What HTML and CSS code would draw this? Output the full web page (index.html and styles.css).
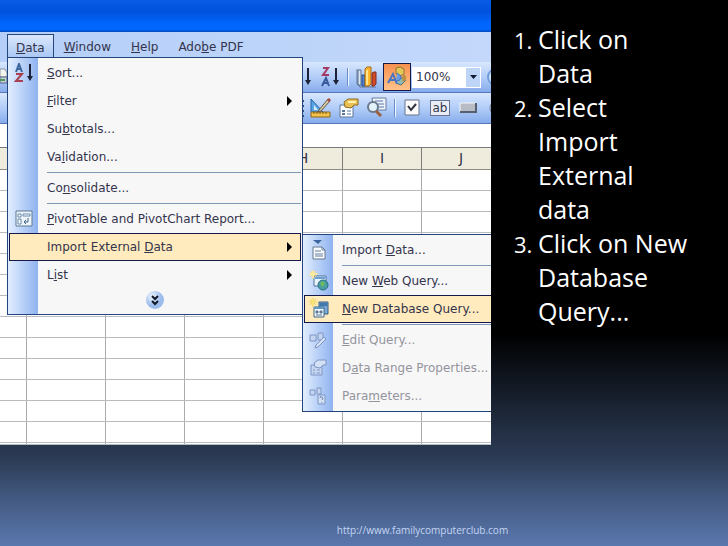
FILE: index.html
```
<!DOCTYPE html>
<html lang="en">
<head>
    <meta charset="UTF-8">
    <meta name="viewport" content="width=device-width, initial-scale=1.0">
    <title>Import External Data</title>
    <link rel="stylesheet" href="styles.css">
</head>
<body>
    <div class="slide">
        <div class="excel">
            <div class="titlebar"></div>

            <nav class="menubar">
                <button class="menu-tab open"><u>D</u>ata</button>
                <button class="menu-tab"><u>W</u>indow</button>
                <button class="menu-tab"><u>H</u>elp</button>
                <button class="menu-tab">Ado<u>b</u>e PDF</button>
            </nav>

            <!-- Standard toolbar -->
            <div class="toolbar">
                <svg class="edge-tool" width="8" height="22" viewBox="0 0 8 22">
                    <path d="M0 3h5l2 4v4H0z" fill="#f4f4ee" stroke="#8c92a0"/>
                    <path d="M0 11h7v6H0z" fill="#c8ccd8" stroke="#596888"/>
                    <path d="M0 14h5" stroke="#4f9a5c" stroke-width="2"/>
                </svg>
                <div class="tools">
                    <svg width="9" height="22" viewBox="0 0 9 22">
                        <path d="M4 2v15" stroke="#1c2238" stroke-width="2"/>
                        <path d="M1 14h6l-3 5z" fill="#1c2238"/>
                    </svg>
                    <button class="tool" aria-label="Sort descending">
                        <svg width="22" height="22" viewBox="0 0 22 22">
                            <path d="M4 2h5L4 9h6" fill="none" stroke="#a53a64" stroke-width="2"/>
                            <path d="M3 20l4-8 3 8M4 17h5" fill="none" stroke="#385a9c" stroke-width="2"/>
                            <path d="M17 2v15" stroke="#1c2238" stroke-width="2"/>
                            <path d="M14 14h6l-3 5z" fill="#1c2238"/>
                        </svg>
                    </button>
                    <span class="divider"></span>
                    <button class="tool" aria-label="Chart wizard">
                        <svg width="22" height="22" viewBox="0 0 22 22">
                            <path d="M2 3v15l3 3h16" fill="none" stroke="#687590" stroke-width="1"/>
                            <path d="M3 4h3v15H3z" fill="#dfe7ef" stroke="#506a94"/>
                            <path d="M7 9h3v11H7z" fill="#4b84d4" stroke="#29508c"/>
                            <path d="M10 3l2-2h4v17l-2 2h-4z" fill="#ffb52c" stroke="#a76818"/>
                            <path d="M11 4h2v15h-2z" fill="#ffe48a"/>
                            <path d="M17 7l2-1h2v12l-2 2h-2z" fill="#d04c28" stroke="#802c20"/>
                        </svg>
                    </button>
                    <div class="zoom-group">
                        <button class="tool active" aria-label="Drawing">
                            <svg width="22" height="22" viewBox="0 0 22 22">
                                <path d="M10 2l4-1 4 2v5l-4 2-4-2z" fill="#e5c75a" stroke="#92742c"/>
                                <path d="M12 12h6l2 2-5 5-5-2z" fill="#8fbbb8" stroke="#4d7477"/>
                                <path d="M17 8l3 2v4l-4 2z" fill="#bd9040"/>
                                <path d="M2 17L7 8l4 10M4 14h6" fill="none" stroke="#4a74c4" stroke-width="2"/>
                                <path d="M11 7l4 3-1 4-4 1" fill="#6b9de4" stroke="#4a74c4"/>
                            </svg>
                        </button>
                        <div class="zoom-box">
                            <input class="zoom-input" type="text" value="100%" aria-label="Zoom">
                            <button class="zoom-arrow" aria-label="Zoom levels">
                                <svg width="7" height="4" viewBox="0 0 7 4"><path d="M0 0h7L3.500 4z" fill="#101830"/></svg>
                            </button>
                        </div>
                    </div>
                    <svg width="4" height="22" viewBox="0 0 4 22">
                        <circle cx="9" cy="11" r="8" fill="#c9e0fb" stroke="#6f9bd8" stroke-width="2"/>
                    </svg>
                </div>
            </div>

            <!-- Control toolbox -->
            <div class="toolbar">
                <div class="tools">
                    <svg width="2" height="22" viewBox="0 0 2 22">
                        <path d="M0 3h2v2H0zM0 8h2v2H0zM0 13h2v2H0zM0 18h2v2H0z" fill="#34507f"/>
                    </svg>
                    <button class="tool" aria-label="Design mode">
                        <svg width="22" height="22" viewBox="0 0 22 22">
                            <path d="M1 2l12 13H1z" fill="#58a5e4" stroke="#2865a8"/>
                            <path d="M4 8l4 5H4z" fill="#d8ecfa"/>
                            <path d="M1 15h19v5H1z" fill="#f2c249" stroke="#8c661c"/>
                            <path d="M4 15v2M7 15v2M10 15v2M13 15v2M16 15v2" stroke="#73541c"/>
                            <path d="M9 13L18 2l2 2-9 10-3 1z" fill="#d9cba6" stroke="#5e5748"/>
                            <path d="M17 3l2-2 2 2-2 2z" fill="#a84840"/>
                        </svg>
                    </button>
                    <button class="tool" aria-label="Properties">
                        <svg width="22" height="22" viewBox="0 0 22 22">
                            <path d="M2 8h13v12H2z" fill="#fbfcff" stroke="#5e7598"/>
                            <path d="M4 13h3v2H4zM4 16h3v2H4z" fill="#58779f"/>
                            <path d="M9 14h4M9 17h4" stroke="#58779f"/>
                            <path d="M6 5l4-3h10v6h-4l-3 3-6-1z" fill="#e9c152" stroke="#8b6b25"/>
                            <path d="M10 5h8" stroke="#fff0ae" stroke-width="2"/>
                        </svg>
                    </button>
                    <button class="tool" aria-label="View code">
                        <svg width="22" height="22" viewBox="0 0 22 22">
                            <path d="M6 1h14v12H8z" fill="#eff4fb" stroke="#687c9d"/>
                            <path d="M9 4h8M12 7h6M13 10h5" stroke="#5878a8"/>
                            <circle cx="7" cy="10" r="5" fill="#e6f2fa" stroke="#68788c" stroke-width="2"/>
                            <path d="M10 14l5 5" stroke="#9c6240" stroke-width="3"/>
                        </svg>
                    </button>
                    <span class="divider"></span>
                    <div class="controls">
                        <button class="tool" aria-label="Check box">
                            <svg width="20" height="22" viewBox="0 0 20 22">
                                <path d="M3 3h14v15H3z" fill="#fbfbfb" stroke="#66738e"/>
                                <path d="M6 9l3 4 5-6" fill="none" stroke="#30343e" stroke-width="2"/>
                            </svg>
                        </button>
                        <button class="tool text-control" aria-label="Text box">ab</button>
                        <button class="tool" aria-label="Command button">
                            <svg width="20" height="22" viewBox="0 0 20 22">
                                <path d="M2 6h16v9H2z" fill="#b8bcc4"/>
                                <path d="M2 15V6h16" fill="none" stroke="#f5f7fa"/>
                                <path d="M2 15h16V6" fill="none" stroke="#565f70" stroke-width="2"/>
                            </svg>
                        </button>
                    </div>
                    <svg width="7" height="22" viewBox="0 0 7 22">
                        <circle cx="13" cy="11" r="7" fill="#f4f7fb" stroke="#66738e"/>
                    </svg>
                </div>
            </div>

            <div class="formula-bar"></div>

            <div class="columns">
                <span></span><span></span><span></span><span></span>
                <span>H</span><span>I</span><span>J</span>
            </div>
            <div class="cells"></div>

            <!-- Data menu -->
            <div class="menu data-menu">
                <button class="item">
                    <span class="icon">
                        <svg width="20" height="20" viewBox="0 0 20 20">
                            <path d="M2 9l3-8 3 8M3 6h4" fill="none" stroke="#3d679c" stroke-width="2"/>
                            <path d="M2 11h6l-6 7h7" fill="none" stroke="#a84050" stroke-width="2"/>
                            <path d="M16 1v14" stroke="#1c2238" stroke-width="2"/>
                            <path d="M13 13h6l-3 5z" fill="#1c2238"/>
                        </svg>
                    </span>
                    <span class="label"><u>S</u>ort...</span>
                </button>
                <button class="item"><span class="icon"></span><span class="label"><u>F</u>ilter</span><span class="more"></span></button>
                <button class="item"><span class="icon"></span><span class="label">Su<u>b</u>totals...</span></button>
                <button class="item"><span class="icon"></span><span class="label">Va<u>l</u>idation...</span></button>
                <hr class="rule">
                <button class="item"><span class="icon"></span><span class="label">Co<u>n</u>solidate...</span></button>
                <hr class="rule">
                <button class="item">
                    <span class="icon">
                        <svg width="20" height="20" viewBox="0 0 20 20">
                            <path d="M2 2h16v15H2z" fill="#eef5fa" stroke="#5d7894"/>
                            <path d="M4 5h3v3H4zM9 5h7v2H9zM4 10h3v5H4z" fill="#fff" stroke="#668aac"/>
                            <path d="M14 9v4h-4M12 11l-2 2 2 2" fill="none" stroke="#426486"/>
                        </svg>
                    </span>
                    <span class="label"><u>P</u>ivotTable and PivotChart Report...</span>
                </button>
                <button class="item selected"><span class="icon"></span><span class="label">Import External <u>D</u>ata</span><span class="more"></span></button>
                <button class="item"><span class="icon"></span><span class="label">L<u>i</u>st</span><span class="more"></span></button>
                <button class="expand" aria-label="Show all">
                    <svg width="20" height="20" viewBox="0 0 20 20">
                        <defs>
                            <radialGradient id="ball" cx="35%" cy="30%">
                                <stop offset="0" stop-color="#f0f6ff"/>
                                <stop offset="1" stop-color="#9cbcec"/>
                            </radialGradient>
                        </defs>
                        <circle cx="10" cy="10" r="9" fill="url(#ball)"/>
                        <path d="M7 6l3 3 3-3M7 11l3 3 3-3" fill="none" stroke="#101828" stroke-width="2"/>
                    </svg>
                </button>
            </div>

            <!-- Import External Data submenu -->
            <div class="menu import-menu">
                <button class="item">
                    <span class="icon">
                        <svg width="22" height="24" viewBox="0 0 22 24">
                            <path d="M5 2h9l-4 4z" fill="#3c649c"/>
                            <path d="M5 9h9l3 3v9H5z" fill="#f8fafc" stroke="#66788e"/>
                            <path d="M14 9v3h3M7 13h6M7 16h8M7 18h8" fill="none" stroke="#64809f"/>
                        </svg>
                    </span>
                    <span class="label">Import <u>D</u>ata...</span>
                </button>
                <hr class="rule">
                <button class="item">
                    <span class="icon">
                        <svg width="22" height="24" viewBox="0 0 22 24">
                            <path d="M6 7h12v10H6z" fill="#eaf3fa" stroke="#4d759e"/>
                            <path d="M7 8h10v2H7z" fill="#6c9fd2"/>
                            <circle cx="15" cy="16" r="5" fill="#4b9ea0" stroke="#286c88"/>
                            <path d="M12 14l3-2 2 3-3 3z" fill="#70bb62"/>
                            <path d="M5 1v9M1 5h9M2 2l6 6M8 2L2 8" stroke="#f6dc7c"/>
                            <path d="M5 2v7M2 5h7" stroke="#fbe9a0" stroke-width="2"/>
                        </svg>
                    </span>
                    <span class="label">New <u>W</u>eb Query...</span>
                </button>
                <button class="item selected">
                    <span class="icon">
                        <svg width="22" height="24" viewBox="0 0 22 24">
                            <path d="M11 5h9v12h-9z" fill="#7caad4" stroke="#355f88"/>
                            <path d="M12 6h7v3h-7z" fill="#4279ac"/>
                            <path d="M6 10h10v10H6z" fill="#f3f7f9" stroke="#3f6788"/>
                            <path d="M6 10h10v2H6z" fill="#609ac4"/>
                            <path d="M8 14h2v2H8zM12 14h2v2h-2zM8 18h6" fill="#59799a" stroke="#59799a"/>
                            <path d="M5 1v9M1 5h9M2 2l6 6M8 2L2 8" stroke="#efcf50"/>
                            <path d="M5 2v7M2 5h7" stroke="#f8e27a" stroke-width="2"/>
                        </svg>
                    </span>
                    <span class="label"><u>N</u>ew Database Query...</span>
                </button>
                <hr class="rule">
                <button class="item" disabled>
                    <span class="icon">
                        <svg width="22" height="24" viewBox="0 0 22 24">
                            <path d="M2 7h6v6H2zM10 5h5v7h-5z" fill="#c5d5ef" stroke="#7d96c5"/>
                            <path d="M8 17l8-8 2 2-8 8-3 1z" fill="#d4e0f3" stroke="#7d96c5"/>
                        </svg>
                    </span>
                    <span class="label"><u>E</u>dit Query...</span>
                </button>
                <button class="item" disabled>
                    <span class="icon">
                        <svg width="22" height="24" viewBox="0 0 22 24">
                            <path d="M3 9h11v10H3z" fill="#c5d5ef" stroke="#7d96c5"/>
                            <path d="M6 7l4-3h8v5h-3l-3 3-5-1z" fill="#d4e0f3" stroke="#7d96c5"/>
                            <path d="M5 14h2M9 14h3M5 17h2M9 17h3" stroke="#7d96c5"/>
                        </svg>
                    </span>
                    <span class="label">D<u>a</u>ta Range Properties...</span>
                </button>
                <button class="item" disabled>
                    <span class="icon">
                        <svg width="22" height="24" viewBox="0 0 22 24">
                            <path d="M2 6h5v5H2zM9 4h4v6H9z" fill="#c5d5ef" stroke="#7d96c5"/>
                            <path d="M10 11h7v9h-7z" fill="#d4e0f3" stroke="#7d96c5"/>
                            <path d="M12 14q0-2 2-1t0 3M14 18v1" fill="none" stroke="#6681b4"/>
                        </svg>
                    </span>
                    <span class="label">Para<u>m</u>eters...</span>
                </button>
            </div>
        </div>

        <ol class="steps">
            <li>Click on<br>Data</li>
            <li>Select<br>Import<br>External<br>data</li>
            <li>Click on New<br>Database<br>Query...</li>
        </ol>

        <footer class="footer">
            <a href="http://www.familycomputerclub.com">http://www.familycomputerclub.com</a>
        </footer>
    </div>
</body>
</html>
```
FILE: styles.css
```
* {
    margin: 0;
    padding: 0;
    box-sizing: border-box;
}

body {
    font-family: "Open Sans", "Noto Sans", sans-serif;
    background: #000;
}

button {
    border: none;
    background: none;
    font: inherit;
    color: inherit;
}

svg {
    display: block;
    flex-shrink: 0;
}

.slide {
    display: grid;
    grid-template-columns: 491fr 237fr;
    grid-template-rows: auto 1fr;
    min-height: 100vh;
    background: linear-gradient(#000 0%, #000 61%, #1f2a3d 77%, #2c3b55 84%, #42587f 91%, #5a77ad 100%);
}

/* Excel window */
.excel {
    position: relative;
    overflow: hidden;
    font-family: "DejaVu Sans", sans-serif;
    font-size: 12px;
    color: #34344c;
    background: #fff;
}

.titlebar {
    height: 32px;
    background: linear-gradient(#0a5be6 0%, #0052dc 35%, #0066fc 75%, #0066fc 92%, #0848bc 100%);
}

.menubar {
    display: flex;
    align-items: flex-start;
    height: 30px;
    padding: 2px 7px 0;
    background: linear-gradient(90deg, #b5cff8, #c3d8fb);
}

.menu-tab {
    height: 26px;
    padding: 0 9px;
    border: 1px solid transparent;
    white-space: nowrap;
}

.menu-tab.open {
    padding: 0 8px;
    border-color: #24477c;
    border-bottom: none;
    background: linear-gradient(#dbe8fc, #a4c3f3);
}

.toolbar {
    display: flex;
    align-items: center;
    height: 31px;
    border-bottom: 1px solid #5678b8;
    background: linear-gradient(#d8e7fe, #b2cdf8 50%, #86aceb);
}

.tools {
    display: flex;
    align-items: center;
    gap: 6px;
    margin-left: auto;
}

.divider {
    width: 2px;
    height: 18px;
    border-left: 1px solid #6a8ccb;
    border-right: 1px solid #eef5ff;
}

.zoom-group {
    display: flex;
    align-items: center;
    gap: 1px;
}

.tool.active {
    display: flex;
    align-items: center;
    justify-content: center;
    width: 28px;
    height: 28px;
    border: 1px solid #10184c;
    background: linear-gradient(#f79150, #ffc28a);
}

.zoom-box {
    display: flex;
    width: 69px;
    height: 21px;
    background: #fff;
}

.zoom-input {
    flex: 1;
    min-width: 0;
    padding-left: 4px;
    border: none;
    font: inherit;
    color: inherit;
}

.zoom-arrow {
    display: flex;
    align-items: center;
    justify-content: center;
    width: 14px;
    margin: 1px;
    background: #bfd5f8;
}

.controls {
    display: flex;
    align-items: center;
    gap: 8px;
}

.text-control {
    width: 20px;
    height: 16px;
    border: 1px solid #66738e;
    background: #e9eef6;
    line-height: 12px;
}

.formula-bar {
    height: 24px;
    border-bottom: 1px solid #777a80;
}

.columns {
    display: grid;
    grid-template-columns: 27px repeat(6, 79px);
    height: 22px;
    border-bottom: 1px solid #8d8d85;
    background: #efecdd;
    font-size: 14px;
    line-height: 21px;
    text-align: center;
}

.columns span {
    border-right: 1px solid #7d7d78;
}

.cells {
    height: 275px;
    border-bottom: 1px solid #b4bcc4;
    background:
        repeating-linear-gradient(transparent 0 20px, #b9bbbe 20px 21px),
        repeating-linear-gradient(90deg, transparent 0 78px, #a9abae 78px 79px) -52px 0 / 632px 100%;
}

/* Menus */
.menu {
    position: absolute;
    padding: 1px;
    border: 1px solid #23447c;
    background: linear-gradient(90deg, #e2eefe, #8fb3f0 30px, #f7f7f8 30px);
}

.data-menu {
    top: 57px;
    left: 7px;
    width: 296px;
}

.import-menu {
    top: 234px;
    left: 302px;
    width: 200px;
}

.item {
    display: flex;
    align-items: center;
    width: 100%;
    height: 28px;
    border: 1px solid transparent;
    text-align: left;
    white-space: nowrap;
}

.item.selected {
    border-color: #14184c;
    background: #ffebbd;
}

.item:disabled {
    color: #94949c;
}

.icon {
    display: flex;
    justify-content: center;
    width: 28px;
    margin-right: 9px;
}

.label {
    flex: 1;
}

.more {
    margin-right: 8px;
    border: 5px solid transparent;
    border-left-color: #000;
    border-right: none;
}

.rule {
    height: 3px;
    margin-left: 38px;
    border: solid transparent;
    border-width: 1px 0;
    background: #8098b4 content-box;
}

.expand {
    display: flex;
    justify-content: center;
    width: 100%;
    height: 24px;
    padding-top: 1px;
}

/* Instructions */
.steps {
    padding: 22px 0 0 47px;
    font-size: 25px;
    line-height: 34px;
    color: #fff;
}

.steps li::marker {
    font-size: 22px;
}

.footer {
    grid-column: 1 / -1;
    align-self: end;
    padding: 0 0 9px 117px;
    font-size: 10px;
    line-height: 14px;
    text-align: center;
}

.footer a {
    color: #c3d6f4;
    text-decoration: none;
}
```
